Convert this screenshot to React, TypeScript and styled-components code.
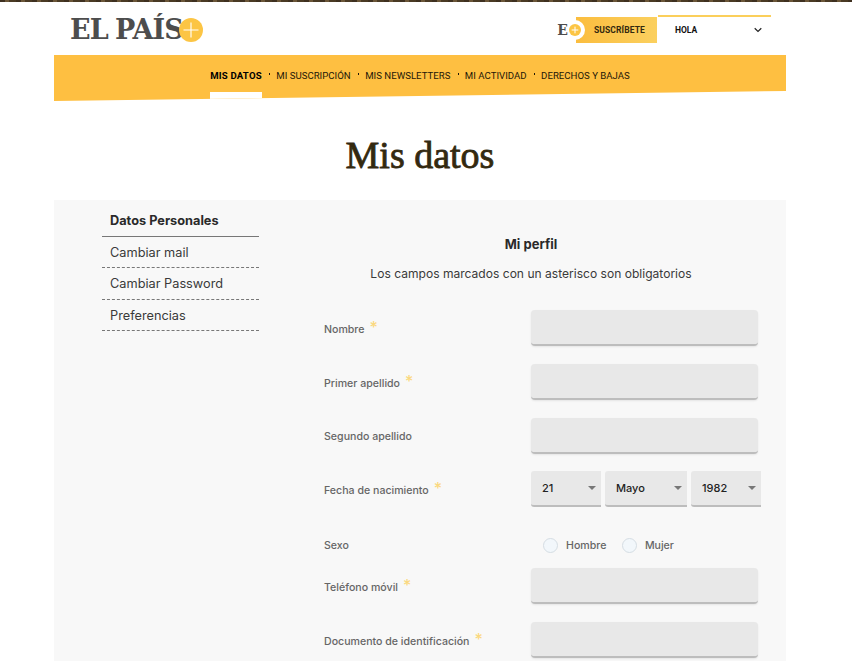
import React from 'react';
import styled, { createGlobalStyle } from 'styled-components';

const GlobalStyle = createGlobalStyle`
  html, body {
    margin: 0;
    height: 661px;
    overflow: hidden;
    background: #fff;
  }
  body {
    font-family: Inter, "Liberation Sans", sans-serif;
  }
`;

const TopStrip = styled.div`
  height: 2px;
  background: repeating-linear-gradient(90deg, #3e3020 0 5px, #6b5638 5px 9px, #4a3a24 9px 16px);
`;

const Page = styled.div`
  width: 732px;
  margin-left: 54px;
`;

const Header = styled.header`
  height: 53px;
  display: flex;
  align-items: flex-start;
  justify-content: space-between;
  padding: 0 15px 0 16px;
  box-sizing: border-box;
`;

const Logo = styled.a`
  display: flex;
  align-items: center;
  margin-top: 14px;
  height: 28px;
`;

const LogoText = styled.span`
  font-family: "DejaVu Serif", serif;
  font-weight: 700;
  font-size: 27px;
  letter-spacing: -0.95px;
  word-spacing: -1px;
  color: #4d4d4d;
  line-height: 28px;
`;

const LogoPlus = styled.span`
  width: 24px;
  height: 24px;
  margin-left: -4px;
  border-radius: 50%;
  background: #fcc544;
  display: flex;
  align-items: center;
  justify-content: center;
`;

const Account = styled.div`
  display: flex;
  align-items: flex-start;
  margin-top: 13px;
`;

const SmallE = styled.span`
  position: relative;
  z-index: 2;
  font-family: "DejaVu Serif", serif;
  font-weight: 700;
  font-size: 14px;
  line-height: 16px;
  color: #4d4d4d;
  margin-top: 7px;
  margin-right: 1px;
`;

const SmallPlus = styled.span`
  position: relative;
  z-index: 1;
  width: 12px;
  height: 12px;
  margin-top: 9px;
  margin-right: -5px;
  border-radius: 50%;
  background: #fcc544;
  box-shadow: 0 0 0 4px #fff;
  display: flex;
  align-items: center;
  justify-content: center;
`;

const Subscribe = styled.a`
  margin-top: 2px;
  width: 81px;
  height: 26px;
  padding-left: 18px;
  box-sizing: border-box;
  background: linear-gradient(90deg, #fbbd3e, #fbd05f);
  font-family: Roboto, sans-serif;
  font-weight: 700;
  font-size: 8.5px;
  line-height: 26px;
  letter-spacing: 0.1px;
  color: #33290f;
`;

const UserMenu = styled.div`
  width: 113px;
  height: 28px;
  margin-left: 1px;
  padding: 0 9px 0 17px;
  box-sizing: border-box;
  border-top: 2px solid #fbcf5b;
  display: flex;
  align-items: center;
  justify-content: space-between;
  font-family: Roboto, sans-serif;
  font-weight: 700;
  font-size: 8.5px;
  color: #111;
`;

const Nav = styled.nav`
  position: relative;
  height: 46px;
  padding-top: 14px;
  box-sizing: border-box;
  background: #febf41;
  clip-path: polygon(0 0, 100% 0, 100% 36px, 0 100%);
  display: flex;
  justify-content: center;
  align-items: flex-start;
`;

const NavItem = styled.a<{ $active?: boolean }>`
  position: relative;
  font-family: Roboto, sans-serif;
  font-size: 9.6px;
  letter-spacing: ${p => (p.$active ? '0.2px' : '0.02px')};
  line-height: 13px;
  font-weight: ${p => (p.$active ? 700 : 400)};
  color: ${p => (p.$active ? '#000' : '#1d1708')};
  white-space: nowrap;

  &:not(:first-child) {
    margin-left: 14.5px;
  }

  &:not(:first-child)::before {
    content: '';
    position: absolute;
    left: -7px;
    top: 4px;
    width: 1px;
    height: 1.5px;
    background: #1d1708;
  }

  ${p =>
    p.$active &&
    `
    &::after {
      content: '';
      position: absolute;
      left: 0;
      right: 0;
      top: 23px;
      height: 12px;
      background: #fff;
    }
  `}
`;

const Title = styled.h1`
  margin: 0;
  height: 99px;
  font-family: "Liberation Serif", serif;
  font-weight: 400;
  font-size: 38px;
  -webkit-text-stroke: 0.8px #33290f;
  line-height: 108px;
  text-align: center;
  color: #33290f;
`;

const Panel = styled.div`
  height: 470px;
  background: #f8f8f8;
  display: flex;
  align-items: flex-start;
`;

const Sidebar = styled.ul`
  list-style: none;
  width: 157px;
  margin: 5px 0 0 48px;
  padding: 0;
`;

const SideItem = styled.li<{ $active?: boolean }>`
  height: 31.5px;
  padding-left: 8px;
  box-sizing: border-box;
  font-size: 12.75px;
  line-height: 31px;
  font-weight: ${p => (p.$active ? 700 : 400)};
  color: ${p => (p.$active ? '#2a2a2a' : '#3a3a3a')};
  border-bottom: 1px ${p => (p.$active ? 'solid #777' : 'dashed #777')};
`;

const Content = styled.div`
  width: 438px;
  margin-left: 65px;
`;

const Heading = styled.h2`
  margin: 36px 0 0;
  padding-right: 24px;
  font-size: 13px;
  line-height: 16px;
  font-weight: 700;
  text-align: center;
  color: #2a2a2a;
`;

const Intro = styled.p`
  margin: 14px 0 28px;
  padding-right: 24px;
  font-size: 12.07px;
  line-height: 16px;
  text-align: center;
  color: #3a3a3a;
  white-space: nowrap;
`;

const Row = styled.div`
  display: grid;
  grid-template-columns: 207px 1fr;
  align-items: center;
  height: 36px;
  margin-bottom: 17.8px;
`;

const Label = styled.label`
  padding-top: 3px;
  font-size: 10.6px;
  line-height: 14px;
  font-weight: 500;
  color: #666;
  white-space: nowrap;
`;

const Star = styled.span`
  position: relative;
  top: 0;
  margin-left: 5px;
  font-size: 16px;
  line-height: 10px;
  color: #fbd97f;
`;

const Field = styled.div`
  align-self: start;
  width: 227px;
  height: 36px;
  border-radius: 4px;
  background: #e8e8e8;
  border-bottom: 2px solid #bdbdbd;
  box-sizing: border-box;
  box-shadow: 0 1px 2px rgba(0, 0, 0, 0.08);
`;

const Selects = styled.div`
  display: flex;
  gap: 4px;
`;

const SelectBox = styled.div<{ $width: number }>`
  width: ${p => p.$width}px;
  height: 36px;
  padding: 0 5px 0 11px;
  box-sizing: border-box;
  display: flex;
  align-items: center;
  justify-content: space-between;
  background: #e8e8e8;
  border-bottom: 2px solid #bdbdbd;
  border-radius: 3px 0 0 3px;
  font-size: 11px;
  font-weight: 500;
  color: #222;
`;

const Caret = styled.span`
  width: 0;
  height: 0;
  border-left: 4px solid transparent;
  border-right: 4px solid transparent;
  border-top: 4px solid #777;
`;

const Radios = styled.div`
  display: flex;
  align-items: center;
  padding-left: 12px;
`;

const RadioDot = styled.span`
  width: 15px;
  height: 15px;
  box-sizing: border-box;
  border-radius: 50%;
  border: 1px solid #d5dde3;
  background: #f2f7fb;
`;

const RadioLabel = styled.span`
  margin: 0 15.5px 0 8px;
  font-size: 10.6px;
  font-weight: 500;
  color: #666;
`;

const SexoRow = styled(Row)`
  height: 25px;
  margin-top: 26px;
  margin-bottom: 9.4px;
`;

const SexoLabel = styled(Label)`
  padding-top: 0;
`;

const Plus = ({ size, width }: { size: number; width: number }) => (
  <svg width={size} height={size} viewBox="0 0 24 24" fill="none" stroke="#fff" strokeWidth={width}>
    <path d="M12 2v20M2 12h20" />
  </svg>
);

const Chevron = () => (
  <svg width="8" height="6" viewBox="0 0 8 6" fill="none" stroke="#222" strokeWidth="1.2">
    <path d="M.7 1.2L4 4.4l3.3-3.2" />
  </svg>
);

const navItems = ['MIS DATOS', 'MI SUSCRIPCIÓN', 'MIS NEWSLETTERS', 'MI ACTIVIDAD', 'DERECHOS Y BAJAS'];
const sideItems = ['Datos Personales', 'Cambiar mail', 'Cambiar Password', 'Preferencias'];

export default function App() {
  return (
    <>
      <GlobalStyle />
      <TopStrip />
      <Page>
        <Header>
          <Logo>
            <LogoText>EL PAÍS</LogoText>
            <LogoPlus>
              <Plus size={18} width={1.5} />
            </LogoPlus>
          </Logo>
          <Account>
            <SmallE>E</SmallE>
            <SmallPlus>
              <Plus size={8} width={3} />
            </SmallPlus>
            <Subscribe>SUSCRÍBETE</Subscribe>
            <UserMenu>
              HOLA
              <Chevron />
            </UserMenu>
          </Account>
        </Header>
        <Nav>
          {navItems.map((item, i) => (
            <NavItem key={item} $active={i === 0}>
              {item}
            </NavItem>
          ))}
        </Nav>
        <Title>Mis datos</Title>
        <Panel>
          <Sidebar>
            {sideItems.map((item, i) => (
              <SideItem key={item} $active={i === 0}>
                {item}
              </SideItem>
            ))}
          </Sidebar>
          <Content>
            <Heading>Mi perfil</Heading>
            <Intro>Los campos marcados con un asterisco son obligatorios</Intro>
            <Row>
              <Label>Nombre<Star>*</Star></Label>
              <Field />
            </Row>
            <Row>
              <Label>Primer apellido<Star>*</Star></Label>
              <Field />
            </Row>
            <Row>
              <Label>Segundo apellido</Label>
              <Field />
            </Row>
            <Row>
              <Label>Fecha de nacimiento<Star>*</Star></Label>
              <Selects>
                <SelectBox $width={70}>21<Caret /></SelectBox>
                <SelectBox $width={82}>Mayo<Caret /></SelectBox>
                <SelectBox $width={70}>1982<Caret /></SelectBox>
              </Selects>
            </Row>
            <SexoRow>
              <SexoLabel>Sexo</SexoLabel>
              <Radios>
                <RadioDot />
                <RadioLabel>Hombre</RadioLabel>
                <RadioDot />
                <RadioLabel>Mujer</RadioLabel>
              </Radios>
            </SexoRow>
            <Row>
              <Label>Teléfono móvil<Star>*</Star></Label>
              <Field />
            </Row>
            <Row>
              <Label>Documento de identificación<Star>*</Star></Label>
              <Field />
            </Row>
          </Content>
        </Panel>
      </Page>
    </>
  );
}
